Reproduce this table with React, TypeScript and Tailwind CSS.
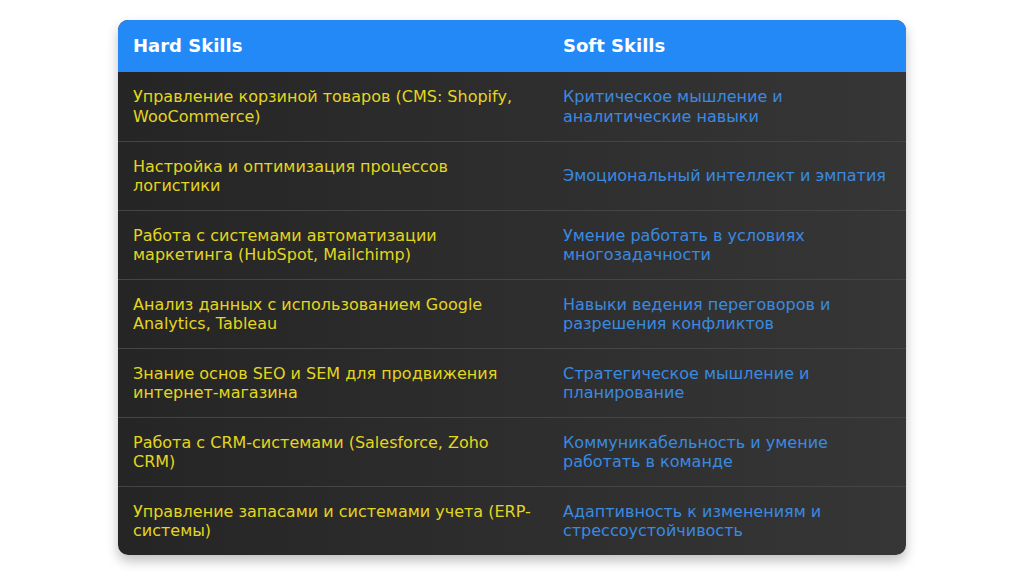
import React from "react";

const rows: [string, string][] = [
  ["Управление корзиной товаров (CMS: Shopify, WooCommerce)", "Критическое мышление и аналитические навыки"],
  ["Настройка и оптимизация процессов логистики", "Эмоциональный интеллект и эмпатия"],
  ["Работа с системами автоматизации маркетинга (HubSpot, Mailchimp)", "Умение работать в условиях многозадачности"],
  ["Анализ данных с использованием Google Analytics, Tableau", "Навыки ведения переговоров и разрешения конфликтов"],
  ["Знание основ SEO и SEM для продвижения интернет-магазина", "Стратегическое мышление и планирование"],
  ["Работа с CRM-системами (Salesforce, Zoho CRM)", "Коммуникабельность и умение работать в команде"],
  ["Управление запасами и системами учета (ERP-системы)", "Адаптивность к изменениям и стрессоустойчивость"],
];

export default function App() {
  return (
    <div
      className="w-[1024px] h-[576px] bg-white flex justify-center pt-[20px]"
      style={{ fontFamily: '"DejaVu Sans", Verdana, sans-serif' }}
    >
      <div className="w-[788px] h-[535px] rounded-[10px] overflow-hidden shadow-[0_6px_12px_rgba(0,0,0,0.25)] bg-gradient-to-r from-[#252525] to-[#363636]">
        <div className="grid grid-cols-[430px_358px] h-[52px] items-center bg-[#2389f7] text-white font-bold text-[18px] leading-[22px]">
          <div className="px-[15px]">Hard Skills</div>
          <div className="px-[15px]">Soft Skills</div>
        </div>
        {rows.map(([a, b], i) => (
          <div
            key={i}
            className={`grid grid-cols-[430px_358px] h-[69px] text-[16px] leading-[19.5px] ${i > 0 ? "border-t border-[#454545]" : ""}`}
          >
            <div className="px-[15px] flex items-center text-[#e3d61f]">{a}</div>
            <div className="px-[15px] flex items-center text-[#3a8ae0]">{b}</div>
          </div>
        ))}
      </div>
    </div>
  );
}
